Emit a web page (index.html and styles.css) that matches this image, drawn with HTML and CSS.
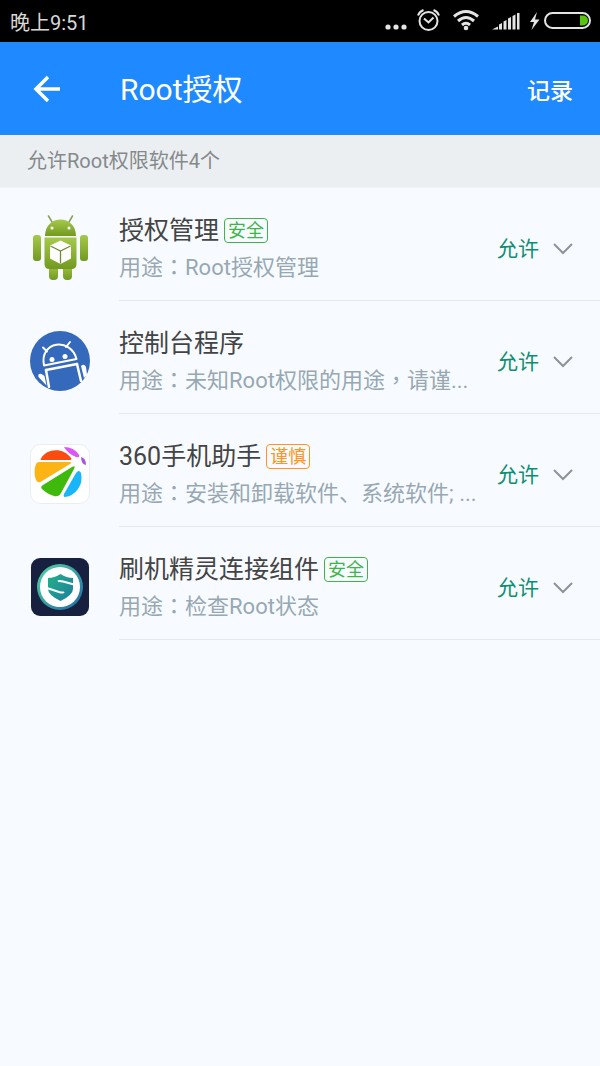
FILE: index.html
```html
<!DOCTYPE html>
<html lang="zh-CN">
<head>
    <meta charset="UTF-8">
    <meta name="viewport" content="width=device-width, initial-scale=1.0">
    <title>Root授权</title>
    <link rel="stylesheet" href="styles.css">
</head>
<body>

    <!-- Status Bar -->
    <div class="status-bar">
        <span class="clock">晚上9:51</span>
        <svg class="status-icons" width="208" height="28" viewBox="0 0 208 28" fill="none" stroke="#e4e4e4" stroke-width="2">
            <g fill="#e4e4e4" stroke="none">
                <circle cx="4" cy="20" r="2.6"/>
                <circle cx="12" cy="20" r="2.6"/>
                <circle cx="20" cy="20" r="2.6"/>
            </g>
            <!-- alarm -->
            <circle cx="44.500" cy="14" r="9"/>
            <path d="M40 11.500l4.500 4 5-5M34 8.500q1.500-4 5.500-5.500M55 8.500q-1.500-4-5.500-5.500"/>
            <!-- wifi -->
            <path d="M70 9.500q12-10 24 0M74 14q8-7 16 0M78 18q4-3.500 8 0" stroke-width="3"/>
            <circle cx="82" cy="21" r="2.300" fill="#e4e4e4" stroke="none"/>
            <!-- signal -->
            <path d="M108 22.500l6-3v3zM115 22.500v-5l3-1.500v6.500zM119.500 22.500v-8l3-1.500v9.500zM124 22.500v-11l3-1.500v12.500zM128.500 22.500V9l3-1.500v15zM133 22.500V6h2.500v16.500z" fill="#e4e4e4" stroke="none"/>
            <!-- battery -->
            <path d="M153 5l-7 10h4l-2.500 8 8-10.500h-4.500z" fill="#e4e4e4" stroke="none"/>
            <rect x="161" y="6" width="45" height="15" rx="7.500"/>
            <path d="M196 8.500h3a5 5 0 0 1 0 10h-3z" fill="#55c413" stroke="none"/>
        </svg>
    </div>

    <!-- Header -->
    <header class="header">
        <button class="back-button" aria-label="返回">
            <svg width="28" height="28" viewBox="0 0 28 28" fill="none" stroke="#fff" stroke-width="3.5">
                <path d="M27 14H3M15 2L3 14l12 12"/>
            </svg>
        </button>
        <h1 class="title">Root授权</h1>
        <button class="log-button">记录</button>
    </header>

    <p class="summary">允许Root权限软件4个</p>

    <!-- App List -->
    <ul class="app-list">
        <li class="app">
            <svg class="app-icon" width="60" height="66" viewBox="0 0 60 66">
                <defs>
                    <linearGradient id="green" x1="0" y1="0" x2="0" y2="1">
                        <stop offset="0" stop-color="#a6c94a"/>
                        <stop offset="1" stop-color="#729a20"/>
                    </linearGradient>
                </defs>
                <path d="M22 7l-3.500-6M39 7l3.500-6" stroke="#8a9f5b" stroke-width="1.500" stroke-linecap="round"/>
                <g fill="url(#green)">
                    <path d="M15 21C15 -1 46 -1 46 21z"/>
                    <rect x="3" y="20" width="8" height="26" rx="3"/>
                    <rect x="50" y="20" width="8" height="26" rx="3"/>
                    <rect x="19" y="48" width="9" height="17" rx="4"/>
                    <rect x="33" y="48" width="9" height="17" rx="4"/>
                    <path d="M14.500 22.500h32V49q0 5-5 5h-22q-5 0-5-5z"/>
                </g>
                <circle cx="22" cy="13" r="1.500" fill="#fff"/>
                <circle cx="39" cy="13" r="1.500" fill="#fff"/>
                <path d="M30.500 25.500l10.500 5v13l-10.500 5.500-10.500-5.500V30.500z" fill="#fff"/>
                <path d="M20.500 31l10 5 10-5M30.500 36v12.500" fill="none" stroke="#6f8a35" stroke-width="1.300"/>
            </svg>
            <div class="app-body">
                <div class="app-info">
                    <h2 class="app-name">授权管理 <span class="tag safe">安全</span></h2>
                    <p class="usage">用途<span class="punct" lang="zh-TW">：</span>Root授权管理</p>
                </div>
                <div class="permission">
                    <select aria-label="授权管理"><option>允许</option><option>拒绝</option></select>
                    <svg class="chevron" width="20" height="12" viewBox="0 0 20 12"><path d="M1 1l9 9 9-9"/></svg>
                </div>
            </div>
        </li>
        <li class="app">
            <svg class="app-icon" width="60" height="60" viewBox="0 0 60 60">
                <circle cx="30" cy="30" r="30" fill="#3569bc"/>
                <g fill="none" stroke="#fff" stroke-width="2" stroke-linecap="round" stroke-linejoin="round">
                    <path d="M14 34.500C9 10 41 6 46.500 28zM17 20.500l-4-4M36 16l4-5"/>
                    <path d="M16 39l31-6" stroke-width="2.500"/>
                    <path d="M16 39l3 17M47 33l4 17" stroke-width="2.500"/>
                </g>
                <circle cx="22" cy="28.500" r="2.500" fill="#fff"/>
                <circle cx="35" cy="25.500" r="2.500" fill="#fff"/>
                <path d="M8.500 46q-1-4 3-3l3 2 2 9.500zM51 35q3-3 5 1l1 8-3 3z" fill="#fff"/>
            </svg>
            <div class="app-body">
                <div class="app-info">
                    <h2 class="app-name">控制台程序</h2>
                    <p class="usage">用途<span class="punct" lang="zh-TW">：</span>未知Root权限的用途<span class="punct" lang="zh-TW">，</span>请谨...</p>
                </div>
                <div class="permission">
                    <select aria-label="控制台程序"><option>允许</option><option>拒绝</option></select>
                    <svg class="chevron" width="20" height="12" viewBox="0 0 20 12"><path d="M1 1l9 9 9-9"/></svg>
                </div>
            </div>
        </li>
        <li class="app">
            <svg class="app-icon" width="60" height="60" viewBox="0 0 60 60">
                <rect x="0.500" y="0.500" width="59" height="59" rx="10" fill="#fff" stroke="#e9edf0"/>
                <path d="M11 14.500C17 3.500 34 3.500 41 14q1 2-1 2H12q-2 0-1-1.500z" fill="#fa4b10"/>
                <path d="M6 20q1-2 3-2h30q4 0 1 2L12 37q-4 3-6-1-3-8 0-16z" fill="#fcb414"/>
                <path d="M13 41l29-18q4-2 2 2L31 49q-2 4-7 3-7-2-12-7-2-2 1-4z" fill="#3fba0c"/>
                <path d="M35 53q-2 0-1-3l12-21q3-4 5 0 2 9-3 16-5 7-13 8z" fill="#18b6f8"/>
                <path d="M34 3q10 0 15 8 1 3-3 2Q38 10 34 3z" fill="#dd55f5"/>
                <path d="M51 13q5 1 5 8-5-1-5-8z" fill="#a854e8"/>
            </svg>
            <div class="app-body">
                <div class="app-info">
                    <h2 class="app-name">360手机助手 <span class="tag caution">谨慎</span></h2>
                    <p class="usage">用途<span class="punct" lang="zh-TW">：</span>安装和卸载软件、系统软件; ...</p>
                </div>
                <div class="permission">
                    <select aria-label="360手机助手"><option>允许</option><option>拒绝</option></select>
                    <svg class="chevron" width="20" height="12" viewBox="0 0 20 12"><path d="M1 1l9 9 9-9"/></svg>
                </div>
            </div>
        </li>
        <li class="app">
            <svg class="app-icon" width="60" height="60" viewBox="0 0 60 60">
                <defs>
                    <linearGradient id="ring" x1="0" y1="0" x2="1" y2="1">
                        <stop offset="0" stop-color="#52d6a0"/>
                        <stop offset="1" stop-color="#2168a8"/>
                    </linearGradient>
                    <linearGradient id="shield" x1="0" y1="0" x2="1" y2="1">
                        <stop offset="0" stop-color="#23b08a"/>
                        <stop offset="1" stop-color="#1d7e9c"/>
                    </linearGradient>
                </defs>
                <rect x="1" y="1" width="58" height="58" rx="9" fill="#17213f"/>
                <circle cx="30" cy="30" r="23" fill="url(#ring)"/>
                <circle cx="30" cy="30" r="20" fill="#fff"/>
                <path d="M30.500 17q6 4 12.500 4v11q0 6-12.500 12Q18 38 18 32V21q6.500 0 12.500-4z" fill="url(#shield)"/>
                <path d="M44 27.500l-11-3q-4-1-5 0M17 31l12 4q4 1 5 0" fill="none" stroke="#fff" stroke-width="2"/>
            </svg>
            <div class="app-body">
                <div class="app-info">
                    <h2 class="app-name">刷机精灵连接组件 <span class="tag safe">安全</span></h2>
                    <p class="usage">用途<span class="punct" lang="zh-TW">：</span>检查Root状态</p>
                </div>
                <div class="permission">
                    <select aria-label="刷机精灵连接组件"><option>允许</option><option>拒绝</option></select>
                    <svg class="chevron" width="20" height="12" viewBox="0 0 20 12"><path d="M1 1l9 9 9-9"/></svg>
                </div>
            </div>
        </li>
    </ul>

</body>
</html>
```
FILE: styles.css
```css
/* General Reset */
* {
    margin: 0;
    padding: 0;
    box-sizing: border-box;
    font-family: Roboto, "Noto Sans CJK SC", sans-serif;
}

/* Body Styling */
body {
    background-color: #f7fbff;
    color: #444;
}

button {
    border: none;
    background: none;
    color: #fff;
    cursor: pointer;
}

/* Status Bar */
.status-bar {
    display: flex;
    justify-content: space-between;
    align-items: center;
    height: 42px;
    padding: 0 8px 0 10px;
    background-color: #000;
}

.clock {
    font-size: 20px;
    color: #d8d8d8;
}

/* Header */
.header {
    display: flex;
    align-items: center;
    height: 93px;
    padding: 0 27px 0 33px;
    background-color: #1f89ff;
    color: #fff;
}

.back-button {
    display: flex;
}

.title {
    flex: 1;
    margin-left: 59px;
    padding-bottom: 4px;
    font-size: 30px;
    font-weight: 400;
}

.log-button {
    font-size: 23px;
    font-weight: 500;
}

/* Summary line under the header */
.summary {
    padding: 0 27px;
    font-size: 20px;
    line-height: 52px;
    background-color: #ebeff2;
    color: #85898c;
    border-bottom: 1px solid #f0f4f7;
}

/* App List */
.app-list {
    list-style: none;
}

.app {
    display: flex;
    align-items: center;
    padding-left: 30px;
}

.app-icon {
    flex: none;
    margin-top: 6px;
}

.app-body {
    flex: 1;
    display: flex;
    align-items: center;
    min-width: 0;
    min-height: 113px;
    margin-left: 29px;
    padding-top: 10px;
    border-bottom: 1px solid #e3e9ed;
}

.app-info {
    flex: 1;
    min-width: 0;
}

.app-name {
    display: flex;
    align-items: center;
    gap: 5px;
    font-size: 25px;
    font-weight: 400;
    line-height: 34px;
}

.usage {
    font-size: 22px;
    line-height: 34px;
    color: #98a8b2;
    white-space: nowrap;
    overflow: hidden;
    text-overflow: ellipsis;
}

/* Centred full-width punctuation */
.punct {
    font-family: "Noto Sans CJK TC", sans-serif;
}

/* Tags */
.tag {
    padding: 0 3px;
    border: 1px solid;
    border-radius: 4px;
    font-size: 18px;
    line-height: 23px;
}

.safe {
    color: #3fb549;
}

.caution {
    color: #ff9420;
}

/* Permission drop-down */
.permission {
    position: relative;
    flex: none;
}

.permission select {
    appearance: none;
    display: block;
    width: 103px;
    border: none;
    background: none;
    font-size: 21px;
    line-height: 36px;
    color: #0f8f70;
    cursor: pointer;
}

.chevron {
    position: absolute;
    top: 50%;
    right: 27px;
    transform: translateY(-50%);
    fill: none;
    stroke: #8d9499;
    stroke-width: 2;
    pointer-events: none;
}
```
